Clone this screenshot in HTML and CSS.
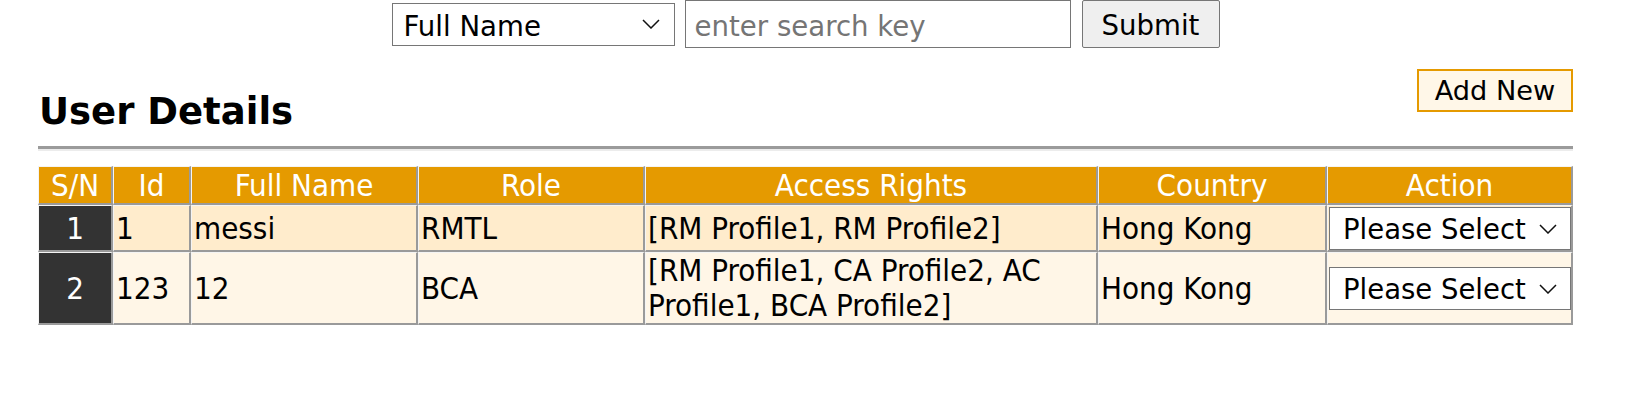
FILE: index.html
```html
<!DOCTYPE html>
<html lang="en">
<head>
<meta charset="utf-8">
<title>User Details</title>
<link rel="stylesheet" href="styles.css">
</head>
<body>
<div class="page">
  <form class="search">
    <span class="select-wrap">
      <select class="search-field">
        <option>Full Name</option>
        <option>Id</option>
        <option>Role</option>
      </select>
      <svg class="chevron" width="18" height="10" viewBox="0 0 18 10" aria-hidden="true"><path d="M1 1 L9 9 L17 1" fill="none" stroke="#111" stroke-width="1.5"/></svg>
    </span>
    <input class="search-key" type="text" placeholder="enter search key">
    <button class="search-submit" type="button">Submit</button>
  </form>

  <div class="toolbar">
    <h2 class="title">User Details</h2>
    <button class="add-new" type="button">Add New</button>
  </div>
  <hr class="rule">

  <table class="users">
    <colgroup>
      <col class="c-sn"><col class="c-id"><col class="c-name"><col class="c-role"><col class="c-rights"><col class="c-country"><col class="c-action">
    </colgroup>
    <thead>
      <tr>
        <th>S/N</th><th>Id</th><th>Full Name</th><th>Role</th><th>Access Rights</th><th>Country</th><th>Action</th>
      </tr>
    </thead>
    <tbody>
      <tr class="row-odd">
        <td class="sn">1</td>
        <td>1</td>
        <td>messi</td>
        <td>RMTL</td>
        <td>[RM Profile1, RM Profile2]</td>
        <td>Hong Kong</td>
        <td class="action">
          <span class="select-wrap block">
            <select class="action-select"><option>Please Select</option><option>Edit</option><option>Delete</option></select>
            <svg class="chevron" width="18" height="10" viewBox="0 0 18 10" aria-hidden="true"><path d="M1 1 L9 9 L17 1" fill="none" stroke="#111" stroke-width="1.5"/></svg>
          </span>
        </td>
      </tr>
      <tr class="row-even">
        <td class="sn">2</td>
        <td>123</td>
        <td>12</td>
        <td>BCA</td>
        <td>[RM Profile1, CA Profile2, AC Profile1, BCA Profile2]</td>
        <td>Hong Kong</td>
        <td class="action">
          <span class="select-wrap block">
            <select class="action-select"><option>Please Select</option><option>Edit</option><option>Delete</option></select>
            <svg class="chevron" width="18" height="10" viewBox="0 0 18 10" aria-hidden="true"><path d="M1 1 L9 9 L17 1" fill="none" stroke="#111" stroke-width="1.5"/></svg>
          </span>
        </td>
      </tr>
    </tbody>
  </table>
</div>
</body>
</html>
```

FILE: styles.css
```css
html, body {
  margin: 0;
  padding: 0;
  background: #ffffff;
}

body {
  font-family: "DejaVu Sans", Verdana, sans-serif;
  color: #000;
}

.page {
  width: 1535px;
  margin-left: 38px;
}

.search {
  display: flex;
  justify-content: center;
  align-items: center;
  height: 48px;
  margin: 0;
}

.select-wrap {
  position: relative;
  display: inline-block;
  line-height: 0;
}

.select-wrap.block {
  display: block;
}

.chevron {
  position: absolute;
  right: 15px;
  top: 50%;
  margin-top: -5px;
  pointer-events: none;
}

.search-field {
  -webkit-appearance: none;
  appearance: none;
  box-sizing: border-box;
  width: 283px;
  height: 43px;
  font-family: "DejaVu Sans", Verdana, sans-serif;
  font-size: 27.6px;
  padding: 3px 40px 0 11px;
  border: 1px solid #767676;
  border-radius: 0;
  background: #fff;
  color: #000;
  margin-top: 1px;
}

.search-key {
  width: 386px;
  height: 48px;
  box-sizing: border-box;
  margin-left: 10px;
  font-family: "DejaVu Sans", Verdana, sans-serif;
  font-size: 27.6px;
  padding: 4px 9px 0 9px;
  border: 1px solid #767676;
  border-radius: 0;
}

.search-key::placeholder {
  color: #757575;
}

.search-submit {
  width: 138px;
  height: 48px;
  box-sizing: border-box;
  margin-left: 11px;
  font-family: "DejaVu Sans", Verdana, sans-serif;
  font-size: 27.6px;
  color: #000;
  background: #efefef;
  border: 1px solid #767676;
  border-radius: 2px;
  padding: 3px 0 0 0;
}

.toolbar {
  display: flex;
  justify-content: space-between;
  align-items: flex-start;
  margin-top: 21px;
}

.title {
  margin: 21px 0 0 1px;
  font-size: 37px;
  font-weight: bold;
  line-height: normal;
  font-family: "DejaVu Sans", Verdana, sans-serif;
}

.add-new {
  width: 156px;
  height: 43px;
  box-sizing: border-box;
  background: #fff7e8;
  border: 2px solid #e59a00;
  border-radius: 0;
  font-family: "DejaVu Sans", Verdana, sans-serif;
  font-size: 27.2px;
  color: #000;
  padding: 0;
}

.rule {
  margin: 13px 0 0 0;
  height: 0;
  border: 0;
  border-top: 3px solid #9b9b9b;
  border-bottom: 2px solid #ececec;
}

.users {
  margin-top: 15px;
  width: 1535px;
  table-layout: fixed;
  border-collapse: separate;
  border-spacing: 0;
  font-family: "DejaVu Sans Condensed", Tahoma, sans-serif;
  font-size: 31px;
}

.c-sn { width: 75px; }
.c-id { width: 78px; }
.c-name { width: 227px; }
.c-role { width: 227px; }
.c-rights { width: 453px; }
.c-country { width: 229px; }
.c-action { width: 246px; }

.users th,
.users td {
  border-top: 1px solid #f4f4f4;
  border-left: 1px solid #f4f4f4;
  border-right: 2px solid #9a9a9a;
  border-bottom: 2px solid #9a9a9a;
  padding: 0 2px;
  line-height: 35px;
  vertical-align: middle;
}

.users th {
  background: #e59a00;
  color: #fff;
  font-weight: normal;
  text-align: center;
  line-height: 36px;
}

.users td {
  text-align: left;
}

.row-odd td {
  background: #ffeccc;
}

.row-even td {
  background: #fff6e7;
}

.users td.sn {
  background: #333333;
  color: #fff;
  text-align: center;
}

.users td.action {
  padding: 1px 0 0 0;
}

.action-select {
  -webkit-appearance: none;
  appearance: none;
  display: block;
  width: 242px;
  height: 43px;
  margin: 0 0 0 1px;
  font-family: "DejaVu Sans", Verdana, sans-serif;
  font-size: 27.5px;
  padding: 0 40px 0 13px;
  border: 1px solid #767676;
  border-radius: 0;
  background: #fff;
  color: #000;
}

.action .chevron {
  right: 14px;
}
```
